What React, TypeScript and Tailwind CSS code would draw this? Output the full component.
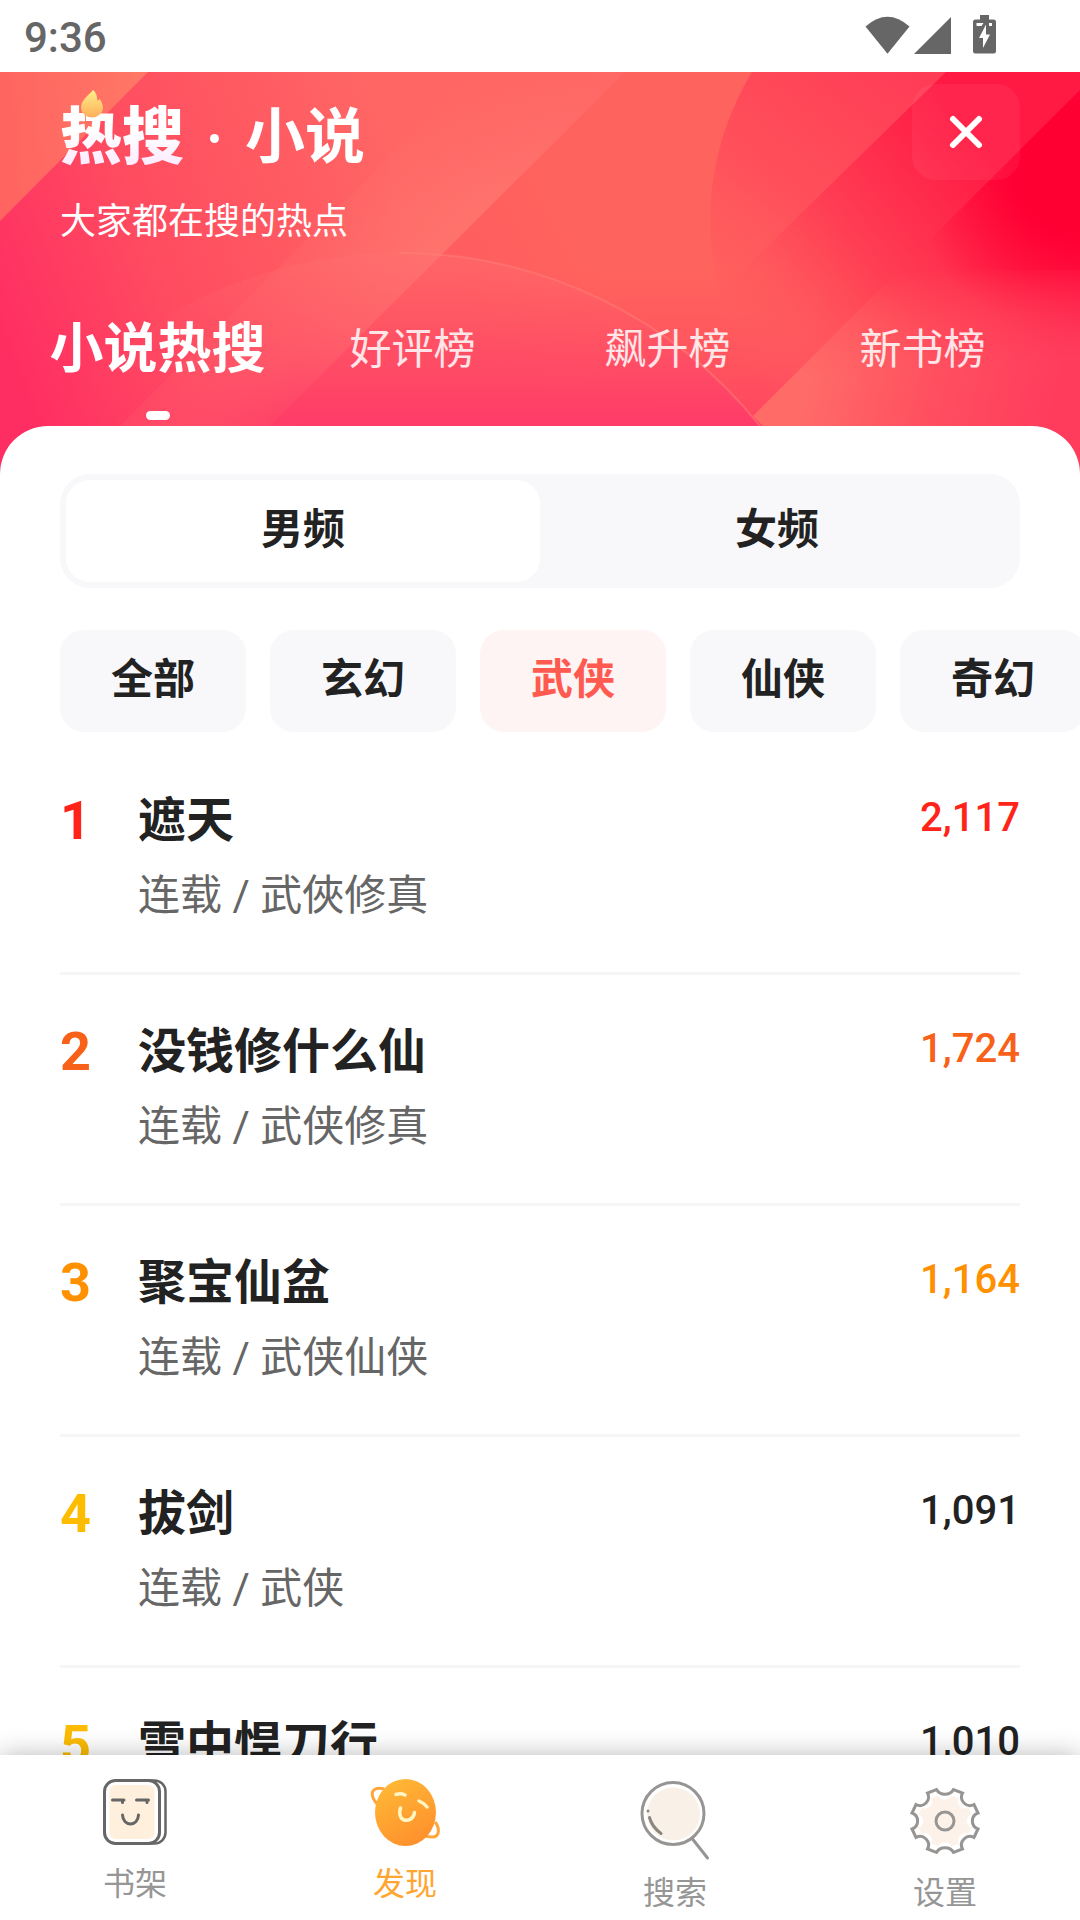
import type { ReactNode } from 'react';

const tabs = ['小说热搜', '好评榜', '飙升榜', '新书榜'];
const channels = ['男频', '女频'];
const genres = ['全部', '玄幻', '武侠', '仙侠', '奇幻'];

const books = [
  { rank: 1, title: '遮天', info: '连载 / 武俠修真', heat: '2,117', rankColor: 'text-[#ff2419]', heatColor: 'text-[#ff2419]' },
  { rank: 2, title: '没钱修什么仙', info: '连载 / 武侠修真', heat: '1,724', rankColor: 'text-[#f8611a]', heatColor: 'text-[#f8611a]' },
  { rank: 3, title: '聚宝仙盆', info: '连载 / 武侠仙侠', heat: '1,164', rankColor: 'text-[#ff9000]', heatColor: 'text-[#ff9000]' },
  { rank: 4, title: '拔剑', info: '连载 / 武侠', heat: '1,091', rankColor: 'text-[#fdbc00]', heatColor: 'text-[#222222]' },
  { rank: 5, title: '雪中悍刀行', info: '连载 / 武侠', heat: '1,010', rankColor: 'text-[#fdbc00]', heatColor: 'text-[#222222]' },
];

function StatusBar() {
  return (
    <div className="flex h-[72px] shrink-0 items-center justify-between bg-white pr-[82px] pl-6 text-[#666666]">
      <span className="pt-1 text-[42px] leading-[48px] font-medium">9:36</span>
      <svg className="h-[42px] w-[134px]" viewBox="864 15 134 42" fill="currentColor" aria-hidden="true">
        <path d="M865.500 26.500Q887.500 7 909.500 26.500L887.500 53.700Z" />
        <path d="M914 54L951 17V54Z" />
        <path
          fillRule="evenodd"
          d="M980 15h9v4.500h4.500a2.500 2.500 0 0 1 2.500 2.500v29a2.500 2.500 0 0 1-2.500 2.500h-18a2.500 2.500 0 0 1-2.500-2.500v-29a2.500 2.500 0 0 1 2.500-2.500h4.500zM986 24.500L979 38h4v10l7-13.500h-4zM976.500 23v3h5l2-3zM989 23v3h3v-3z"
        />
      </svg>
    </div>
  );
}

function HeaderBackdrop() {
  return (
    <svg
      className="absolute inset-0 h-full w-full"
      viewBox="0 72 1080 402"
      preserveAspectRatio="none"
      aria-hidden="true"
    >
      <defs>
        <linearGradient id="base" gradientUnits="userSpaceOnUse" x1="0" y1="330" x2="400" y2="170">
          <stop offset="0" stopColor="#ff2e62" />
          <stop offset="0.4" stopColor="#ff4c60" />
          <stop offset="1" stopColor="#ff6664" />
        </linearGradient>
        <linearGradient id="corner" gradientUnits="userSpaceOnUse" x1="0" y1="100" x2="140" y2="90">
          <stop offset="0" stopColor="#ff6460" />
          <stop offset="1" stopColor="#ff7766" />
        </linearGradient>
        <linearGradient id="ridge" gradientUnits="userSpaceOnUse" x1="330" y1="170" x2="420" y2="260">
          <stop offset="0" stopColor="#ff7a72" stopOpacity="0.05" />
          <stop offset="1" stopColor="#ff7a72" stopOpacity="0.6" />
        </linearGradient>
        <linearGradient id="ridgeFade" gradientUnits="userSpaceOnUse" x1="0" y1="72" x2="0" y2="200">
          <stop offset="0" stopColor="#fff" stopOpacity="0.15" />
          <stop offset="1" stopColor="#fff" />
        </linearGradient>
        <mask id="ridgeMask" maskUnits="userSpaceOnUse" x="0" y="72" width="700" height="402">
          <rect x="0" y="72" width="700" height="402" fill="url(#ridgeFade)" />
        </mask>
        <linearGradient id="middle" gradientUnits="userSpaceOnUse" x1="440" y1="260" x2="560" y2="200">
          <stop offset="0" stopColor="#ff5c60" />
          <stop offset="1" stopColor="#ff635d" />
        </linearGradient>
        <linearGradient id="lowerArc" gradientUnits="userSpaceOnUse" x1="400" y1="255" x2="400" y2="420">
          <stop offset="0" stopColor="#ff7070" stopOpacity="0.4" />
          <stop offset="0.5" stopColor="#ff5068" stopOpacity="0.5" />
          <stop offset="1" stopColor="#ff3c68" stopOpacity="0.95" />
        </linearGradient>
        <linearGradient id="arcFade" gradientUnits="userSpaceOnUse" x1="60" y1="0" x2="300" y2="0">
          <stop offset="0" stopColor="#fff" stopOpacity="0" />
          <stop offset="1" stopColor="#fff" />
        </linearGradient>
        <mask id="arcMask" maskUnits="userSpaceOnUse" x="0" y="200" width="900" height="300">
          <rect x="0" y="200" width="900" height="300" fill="url(#arcFade)" />
        </mask>
        <linearGradient id="lowerRight" gradientUnits="userSpaceOnUse" x1="700" y1="270" x2="700" y2="440">
          <stop offset="0" stopColor="#ff4a60" stopOpacity="0" />
          <stop offset="1" stopColor="#ff4260" />
        </linearGradient>
        <linearGradient id="disc" gradientUnits="userSpaceOnUse" x1="690" y1="330" x2="900" y2="60">
          <stop offset="0" stopColor="#ff6060" stopOpacity="0" />
          <stop offset="0.45" stopColor="#ff525b" />
          <stop offset="1" stopColor="#ff3c56" />
        </linearGradient>
        <linearGradient id="beam" gradientUnits="userSpaceOnUse" x1="740" y1="310" x2="970" y2="130">
          <stop offset="0" stopColor="#ff5a5c" stopOpacity="0" />
          <stop offset="0.45" stopColor="#ff3e54" />
          <stop offset="1" stopColor="#ff1a43" />
        </linearGradient>
        <radialGradient id="edge" gradientUnits="userSpaceOnUse" cx="1080" cy="170" r="170">
          <stop offset="0" stopColor="#ff0033" />
          <stop offset="0.4" stopColor="#ff0033" />
          <stop offset="1" stopColor="#ff0a3a" stopOpacity="0" />
        </radialGradient>
        <linearGradient id="fold" gradientUnits="userSpaceOnUse" x1="810" y1="360" x2="1050" y2="420">
          <stop offset="0" stopColor="#ff6c68" />
          <stop offset="0.5" stopColor="#ff5060" />
          <stop offset="1" stopColor="#ff3c5c" />
        </linearGradient>
        <linearGradient id="foldFade" gradientUnits="userSpaceOnUse" x1="920" y1="270" x2="930" y2="400">
          <stop offset="0" stopColor="#fff" stopOpacity="0" />
          <stop offset="0.75" stopColor="#fff" stopOpacity="1" />
        </linearGradient>
        <mask id="foldMask" maskUnits="userSpaceOnUse" x="700" y="72" width="400" height="420">
          <rect x="700" y="72" width="400" height="420" fill="url(#foldFade)" />
        </mask>
      </defs>
      <rect y="72" width="1080" height="402" fill="url(#base)" />
      <path d="M0 72H148L0 221Z" fill="url(#corner)" />
      <path d="M474 72H625L222 474H72Z" fill="url(#ridge)" mask="url(#ridgeMask)" />
      <path d="M625 72H1080V474H222Z" fill="url(#middle)" />
      <path d="M440 256H1080V474H222Z" fill="url(#lowerRight)" />
      <circle cx="400" cy="714" r="461" fill="url(#lowerArc)" mask="url(#arcMask)" />
      <path d="M400 253A461 461 0 0 1 760 426" fill="none" stroke="#ff8078" strokeWidth="2" opacity="0.5" />
      <circle cx="999" cy="222" r="289" fill="url(#disc)" />
      <path d="M946 72H1080V474H811L753 416L700 312Z" fill="url(#beam)" />
      <path d="M1080 90V400H769Z" fill="url(#edge)" />
      <path d="M899 270H1080V474H811L753 416Z" fill="url(#fold)" mask="url(#foldMask)" />
    </svg>
  );
}

function Flame() {
  return (
    <svg className="absolute -top-3 left-[21px] h-[28px] w-[22px]" viewBox="0 0 22 28" aria-hidden="true">
      <defs>
        <linearGradient id="flame" x1="0" y1="0" x2="0" y2="1">
          <stop offset="0" stopColor="#fff08a" />
          <stop offset="1" stopColor="#ffae5a" />
        </linearGradient>
      </defs>
      <path
        d="M12 0C8 5 0 10 0 17.500a11 10 0 0 0 22 0C22 14 20 11 18.500 8.500C18 10 17.500 10.500 16.500 10.500C15.500 7 16.500 3.500 12 0Z"
        fill="url(#flame)"
      />
    </svg>
  );
}

function Header() {
  return (
    <header className="relative shrink-0 bg-[#ff3a60] pt-3 pb-[54px] text-white">
      <HeaderBackdrop />
      <div className="relative flex items-start justify-between px-[60px]">
        <div>
          <h1 className="flex h-[108px] items-center text-[60px] leading-[72px] font-bold">
            <span className="relative">
              <span className="bg-linear-to-b from-white from-40% to-[#fbe6ff] bg-clip-text text-[62px] font-black text-transparent">
                热搜
              </span>
              <Flame />
            </span>
            <span className="mx-[26px] size-[9px] rounded-full bg-white" aria-hidden="true" />
            <span>小说</span>
          </h1>
          <p className="mt-[3px] text-[36px] leading-[54px]">大家都在搜的热点</p>
        </div>
        <button
          type="button"
          aria-label="关闭"
          className="flex h-24 w-[108px] items-center justify-center rounded-3xl bg-white/5"
        >
          <svg
            className="size-9"
            viewBox="0 0 36 36"
            fill="none"
            stroke="currentColor"
            strokeWidth="6"
            strokeLinecap="round"
            aria-hidden="true"
          >
            <path d="M5 5L31 31M31 5L5 31" />
          </svg>
        </button>
      </div>
      <nav className="relative mt-[65px] grid grid-cols-4 px-[30px]">
        {tabs.map((tab, i) => (
          <button key={tab} type="button" className="flex flex-col items-center">
            {i === 0 ? (
              <>
                <span className="text-[54px] leading-[72px] font-bold">{tab}</span>
                <span className="mt-[25px] h-[9px] w-6 rounded-full bg-white" />
              </>
            ) : (
              <span className="text-[42px] leading-[72px] text-white/85">{tab}</span>
            )}
          </button>
        ))}
      </nav>
    </header>
  );
}

function BookshelfIcon() {
  return (
    <svg className="h-[84px] w-[78px]" viewBox="96 1779 78 84" fill="none" aria-hidden="true">
      <rect x="112" y="1780.500" width="53.500" height="63" rx="11" fill="#fff" stroke="#666" strokeWidth="2.500" />
      <rect x="104.500" y="1780.500" width="55" height="63" rx="11" fill="#fff" stroke="#666" strokeWidth="3" />
      <rect x="109.500" y="1785" width="45" height="54" rx="6" fill="#fff0de" />
      <g stroke="#666" strokeWidth="3" strokeLinecap="round">
        <path d="M112.500 1800H124M136.500 1800H148.500" />
        <path d="M122.500 1800.500V1802.500M147 1800.500V1802.500" />
        <path d="M122.500 1815C123 1827 138 1827 138.500 1815" />
      </g>
    </svg>
  );
}

function PlanetIcon() {
  return (
    <svg className="h-[84px] w-[78px]" viewBox="366 1779 78 84" fill="none" aria-hidden="true">
      <defs>
        <linearGradient id="planet" x1="0.200" y1="0" x2="0.700" y2="1">
          <stop offset="0" stopColor="#ffb936" />
          <stop offset="1" stopColor="#ff8f2d" />
        </linearGradient>
      </defs>
      <path d="M384 1789C376 1787 371 1790 372.500 1796C373 1799 376 1803 380 1807" stroke="#ffa53a" strokeWidth="3" />
      <path d="M435 1822C440 1828 440 1837 432 1837C429 1837 425 1836 422 1835" stroke="#ffa53a" strokeWidth="3" />
      <ellipse cx="405.500" cy="1812.500" rx="30.500" ry="33.500" fill="url(#planet)" />
      <g stroke="#fff6c4" strokeWidth="3.500" strokeLinecap="round">
        <path d="M396 1794.500Q401 1793 405 1795" />
        <path d="M419 1801Q424 1803 427 1807" />
        <path d="M400.500 1808C396 1823 413 1824 414.500 1812.500" />
      </g>
    </svg>
  );
}

function SearchIcon() {
  return (
    <svg className="h-[93px] w-[78px]" viewBox="636 1779 78 93" fill="none" aria-hidden="true">
      <circle cx="673" cy="1813.500" r="31" fill="#fff" stroke="#979593" strokeWidth="3" />
      <circle cx="673.500" cy="1814" r="26.500" fill="#f9f1e7" />
      <path d="M692.500 1839L707.500 1858" stroke="#979593" strokeWidth="3" strokeLinecap="round" />
      <path d="M649.500 1817.500Q652 1827 661 1833.500" stroke="#8c8680" strokeWidth="3" strokeLinecap="round" />
      <circle cx="648" cy="1811" r="1.500" fill="#8c8680" />
    </svg>
  );
}

const gearPath =
  'M-8.500 -31.500A9.500 8.500 0 0 0 8.500 -31.500L17.500 -28A8.500 8.500 0 0 0 29 -16.500L33 -8A8.500 8.500 0 0 0 33 8L29 16.500A8.500 8.500 0 0 0 17.500 28L8.500 31.500A9.500 8.500 0 0 0 -8.500 31.500L-17.500 28A8.500 8.500 0 0 0 -29 16.500L-33 8A8.500 8.500 0 0 0 -33 -8L-29 -16.500A8.500 8.500 0 0 0 -17.500 -28Z';

function SettingsIcon() {
  return (
    <svg className="h-[93px] w-[78px]" viewBox="-39 -42 78 93" fill="none" aria-hidden="true">
      <path d={gearPath} fill="#fff" stroke="#979593" strokeWidth="3" />
      <path d={gearPath} fill="#fcf2ea" transform="scale(0.8)" />
      <circle r="9" stroke="#979593" strokeWidth="3" />
    </svg>
  );
}

const navItems: { label: string; icon: ReactNode; color: string }[] = [
  { label: '书架', icon: <BookshelfIcon />, color: 'text-[#969696]' },
  { label: '发现', icon: <PlanetIcon />, color: 'text-[#ffa532]' },
  { label: '搜索', icon: <SearchIcon />, color: 'text-[#969696]' },
  { label: '设置', icon: <SettingsIcon />, color: 'text-[#969696]' },
];

function BottomNav() {
  return (
    <nav className="relative grid h-[165px] shrink-0 grid-cols-4 bg-white pt-6 shadow-[0_0_24px_rgba(0,0,0,0.28)]">
      {navItems.map((item) => (
        <a key={item.label} href="#" className="flex flex-col items-center">
          {item.icon}
          <span className={`mt-[3px] text-[32px] leading-9 ${item.color}`}>{item.label}</span>
        </a>
      ))}
    </nav>
  );
}

export default function App() {
  return (
    <div
      lang="zh-CN"
      className="flex h-screen flex-col overflow-hidden bg-white font-['Roboto','Noto_Sans_CJK_SC',sans-serif] text-[#222222]"
    >
      <StatusBar />
      <Header />
      <main className="relative -mt-12 min-h-0 flex-1 overflow-hidden rounded-t-[48px] bg-white pt-12">
        <div className="mx-[60px] grid grid-cols-2 rounded-[30px] bg-[#f8f8fb] p-1.5">
          {channels.map((channel, i) => (
            <button
              key={channel}
              type="button"
              className={`h-[102px] rounded-3xl pb-0.5 text-[42px] leading-[60px] font-bold ${i === 0 ? 'bg-white' : ''}`}
            >
              {channel}
            </button>
          ))}
        </div>
        <div className="mt-[42px] flex gap-6 overflow-hidden pl-[60px]">
          {genres.map((genre) => (
            <button
              key={genre}
              type="button"
              className={`h-[102px] shrink-0 rounded-3xl px-[51px] pb-0.5 text-[42px] leading-[60px] font-bold ${
                genre === '武侠' ? 'bg-[#fff4f4] text-[#ff5a50]' : 'bg-[#f8f8fb]'
              }`}
            >
              {genre}
            </button>
          ))}
        </div>
        <ol className="mx-[60px] mt-3">
          {books.map((book) => (
            <li key={book.rank} className="flex items-start border-b-3 border-[#f6f6f6] pt-11 pb-[46px]">
              <span className={`w-[78px] shrink-0 text-[54px] leading-[66px] font-bold ${book.rankColor}`}>{book.rank}</span>
              <div className="min-w-0 flex-1">
                <h2 className="text-[48px] leading-[66px] font-bold">{book.title}</h2>
                <p className="mt-3 text-[42px] leading-[60px] text-[#666666]">{book.info}</p>
              </div>
              <span className={`text-[40px] leading-[60px] font-medium ${book.heatColor}`}>{book.heat}</span>
            </li>
          ))}
        </ol>
      </main>
      <BottomNav />
    </div>
  );
}
